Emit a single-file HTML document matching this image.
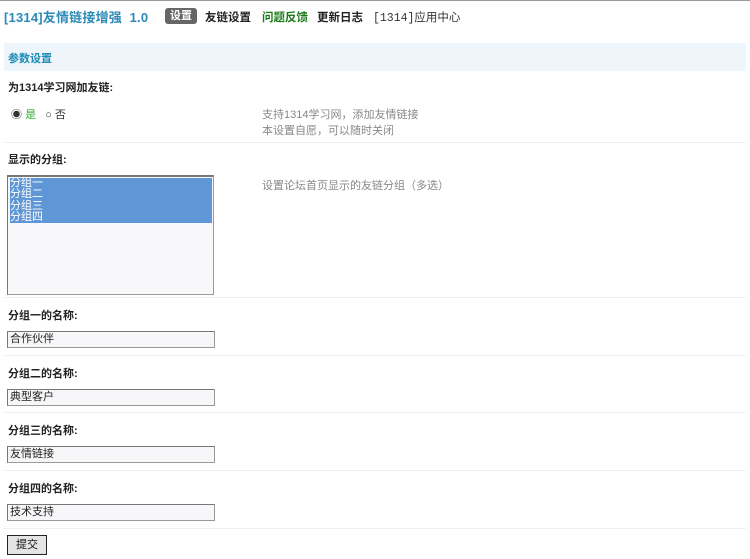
<!DOCTYPE html>
<html><head><meta charset="utf-8"><style>
body{margin:0;width:750px;height:559px;background:#fff;position:relative;overflow:hidden;font-family:"Liberation Sans","Noto Sans CJK SC",sans-serif;font-size:11px;color:#333}
.a{position:absolute;white-space:nowrap}
.b{font-weight:bold;color:#222}
.hr{position:absolute;left:4px;width:742px;height:1px;background:#eef1f4}
.inp{position:absolute;left:7px;width:204px;height:15px;border:1px solid #999;border-top-color:#777;border-left-color:#777;background:#f7f7f9;font-size:11px;line-height:15px;padding-left:2px;color:#222}
</style></head><body>
<div style="position:absolute;left:0;top:0;width:750px;height:1px;background:#999"></div>
<div class="a b" style="left:4px;top:7px;font-size:13px;color:#2b8ab8;letter-spacing:0.2px">[1314]友情链接增强&nbsp;&nbsp;1.0</div>
<div class="a b" style="left:165px;top:8px;width:32px;height:16px;background:#666;color:#fff;border-radius:3px;text-align:center;line-height:16px">设置</div>
<div class="a b" style="left:205px;top:9px;font-size:11.5px">友链设置</div>
<div class="a b" style="left:262px;top:9px;color:#1a7a1a;font-size:11.5px">问题反馈</div>
<div class="a b" style="left:317px;top:9px;font-size:11.5px">更新日志</div>
<div class="a" style="left:373px;top:9px;font-size:11.5px;font-family:'Liberation Mono','Noto Sans CJK SC',monospace">[1314]应用中心</div>
<div style="position:absolute;left:4px;top:43px;width:742px;height:28px;background:#eef5fb"></div>
<div class="a b" style="left:8px;top:50px;color:#1a8bb5">参数设置</div>
<div class="a b" style="left:8px;top:79px">为1314学习网加友链:</div>
<div class="a" style="left:11px;top:106px">◉ <span style="color:#3a3">是</span> &nbsp; ○ 否</div>
<div class="a" style="left:262px;top:106px;color:#888">支持1314学习网，添加友情链接</div>
<div class="a" style="left:262px;top:122px;color:#888">本设置自愿，可以随时关闭</div>
<div class="hr" style="top:142px"></div>
<div class="a b" style="left:8px;top:151px">显示的分组:</div>
<div style="position:absolute;left:7px;top:175px;width:205px;height:117px;border:1px solid #999;border-top:2px solid #777;border-left-color:#777;background:#f8f7fa"></div>
<div style="position:absolute;left:10px;top:178px;width:202px;height:45px;background:#5f97d6;color:#fff;font-size:11px;line-height:11.3px">分组一<br>分组二<br>分组三<br>分组四</div>
<div class="a" style="left:262px;top:177px;color:#888">设置论坛首页显示的友链分组（多选）</div>
<div class="hr" style="top:297px"></div>
<div class="a b" style="left:8px;top:307px">分组一的名称:</div>
<div class="inp" style="top:331px">合作伙伴</div>
<div class="hr" style="top:355px"></div>
<div class="a b" style="left:8px;top:365px">分组二的名称:</div>
<div class="inp" style="top:389px">典型客户</div>
<div class="hr" style="top:412px"></div>
<div class="a b" style="left:8px;top:422px">分组三的名称:</div>
<div class="inp" style="top:446px">友情链接</div>
<div class="hr" style="top:470px"></div>
<div class="a b" style="left:8px;top:480px">分组四的名称:</div>
<div class="inp" style="top:504px">技术支持</div>
<div class="hr" style="top:528px"></div>
<div class="a" style="left:7px;top:535px;width:38px;height:18px;border:1px solid #222;background:#e4e4e4;text-align:center;line-height:18px;color:#111">提交</div>
</body></html>
